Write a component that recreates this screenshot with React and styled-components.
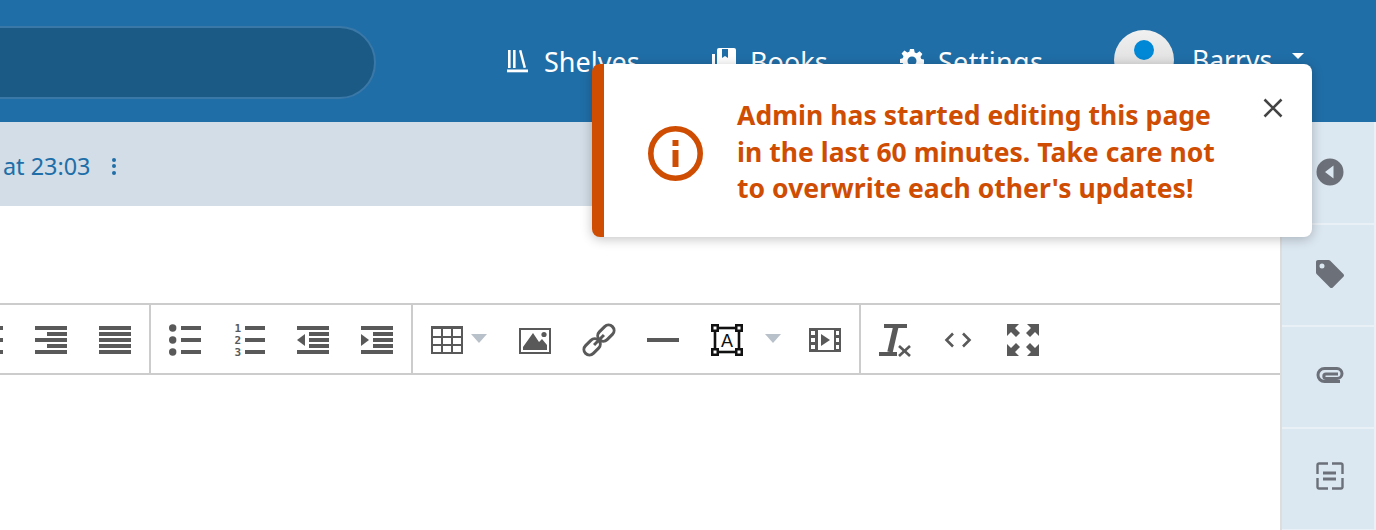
import React from "react";
import styled, { createGlobalStyle } from "styled-components";

const GlobalStyle = createGlobalStyle`
  html, body {
    margin: 0;
    padding: 0;
    background: #ffffff;
    overflow: hidden;
  }
  body {
    font-family: "Noto Sans", "Open Sans", sans-serif;
  }
`;

const Page = styled.div`
  position: relative;
  width: 1376px;
  height: 530px;
  overflow: hidden;
`;

const Header = styled.header`
  height: 122px;
  background: #206ea7;
  display: flex;
  align-items: center;
  color: #ffffff;
`;

const Search = styled.div`
  width: 426px;
  height: 73px;
  margin-left: -50px;
  margin-top: 3px;
  box-sizing: border-box;
  border-radius: 37px;
  background: #1c5a86;
  border: 2px solid #3a78a8;
`;

const Nav = styled.nav`
  display: flex;
  align-items: center;
  margin-left: 131px;
`;

const NavLink = styled.a`
  display: flex;
  align-items: center;
  gap: ${(p) => p.$gap}px;
  width: ${(p) => p.$width}px;
  font-size: 27px;
  letter-spacing: ${(p) => p.$spacing || 0}px;
  color: #ffffff;
`;

const User = styled.div`
  display: flex;
  align-items: center;
  margin-left: -4px;
  margin-top: -2px;
  font-size: 26.5px;
`;

const Avatar = styled.div`
  position: relative;
  width: 60px;
  height: 60px;
  border-radius: 50%;
  background: linear-gradient(#f1f1f1, #d4d4d4);
  margin-right: 18px;
  &::after {
    content: "";
    position: absolute;
    left: 20px;
    top: 10px;
    width: 20px;
    height: 20px;
    border-radius: 50%;
    background: #0088d6;
  }
`;

const Caret = styled.span`
  width: 0;
  height: 0;
  margin-left: 20px;
  margin-top: -8px;
  border-left: 6px solid transparent;
  border-right: 6px solid transparent;
  border-top: 6px solid #ffffff;
`;

const Main = styled.div`
  display: flex;
  height: 408px;
`;

const Content = styled.main`
  flex: 1;
  min-width: 0;
  overflow: hidden;
`;

const MetaBar = styled.div`
  height: 84px;
  box-sizing: border-box;
  padding: 4px 0 0 3px;
  background: #d2dde7;
  display: flex;
  align-items: center;
  color: #206ea7;
  font-size: 23.4px;
`;

const Dots = styled.span`
  display: flex;
  flex-direction: column;
  gap: 2.5px;
  margin-left: 22px;
  i {
    display: block;
    width: 4px;
    height: 4px;
    border-radius: 50%;
    background: #206ea7;
  }
`;

const TitleArea = styled.div`
  height: 97px;
  background: #ffffff;
`;

const Toolbar = styled.div`
  display: flex;
  height: 68px;
  width: 1400px;
  margin-left: -45px;
  border-top: 2px solid #cccccc;
  border-bottom: 2px solid #cccccc;
`;

const Group = styled.div`
  display: flex;
  padding: 0 2px 0 ${(p) => (p.$first ? 0 : 2)}px;
  border-right: ${(p) => (p.$last ? 0 : 2)}px solid #cccccc;
`;

const ToolButton = styled.div`
  width: ${(p) => p.$width || 64}px;
  height: 68px;
  box-sizing: border-box;
  padding: 2px 0 0 16px;
  display: flex;
  align-items: center;
  gap: 8px;
  color: #595959;
  svg {
    flex: none;
  }
`;

const SplitCaret = styled.span`
  flex: none;
  width: 0;
  height: 0;
  margin-top: -3px;
  margin-left: ${(p) => p.$offset || 0}px;
  border-left: 8px solid transparent;
  border-right: 8px solid transparent;
  border-top: 9px solid #b8c1c9;
`;

const Sidebar = styled.aside`
  width: 96px;
  flex: none;
  box-sizing: border-box;
  padding-top: 1px;
  background: #dbe7f1;
  border-left: 2px solid #dddddd;
  border-right: 2px solid #e9f0f6;
`;

const SideItem = styled.div`
  height: 102px;
  box-sizing: border-box;
  border-bottom: 2px solid #e9f0f6;
  padding-top: ${(p) => p.$top}px;
  padding-left: 4px;
  display: flex;
  justify-content: center;
  color: #6c7078;
`;

const Toast = styled.div`
  position: absolute;
  left: 592px;
  top: 64px;
  width: 720px;
  height: 173px;
  box-sizing: border-box;
  display: flex;
  align-items: center;
  gap: 34px;
  padding: 4px 0 0 44px;
  background: #ffffff;
  border-left: 12px solid #cf4d03;
  border-radius: 8px;
  box-shadow: 0 2px 12px rgba(0, 0, 0, 0.24);
  color: #cf4d03;
`;

const ToastIcon = styled.div`
  display: flex;
  margin-top: 2px;
`;

const ToastText = styled.div`
  font-size: 26.5px;
  font-weight: 700;
  letter-spacing: 0.04px;
  line-height: 36.7px;
  margin-top: -1px;
`;

const Close = styled.button`
  position: absolute;
  right: 29px;
  top: 34px;
  padding: 0;
  border: 0;
  background: none;
  display: flex;
  color: #444444;
`;

const Icon = ({ size = 32, h, children, fill = "currentColor" }) => (
  <svg width={size} height={h || size} viewBox={`0 0 ${size} ${h || size}`} fill={fill} overflow="visible">
    {children}
  </svg>
);

const Lines = ({ rows }) =>
  rows.map(([x, w], i) => <rect key={i} x={x} y={2 + i * 6} width={w} height="4" />);

const AlignCenter = () => (
  <Icon><Lines rows={[[0, 32], [6, 20], [0, 32], [6, 20], [0, 32]]} /></Icon>
);
const AlignRight = () => (
  <Icon><Lines rows={[[0, 32], [12, 20], [0, 32], [12, 20], [0, 32]]} /></Icon>
);
const Justify = () => (
  <Icon><Lines rows={[[0, 32], [0, 32], [0, 32], [0, 32], [0, 32]]} /></Icon>
);
const BulletList = () => (
  <Icon>
    {[4, 16, 28].map((y) => (
      <g key={y}>
        <circle cx="3.7" cy={y} r="3.7" />
        <rect x="12" y={y - 2} width="20" height="4" />
      </g>
    ))}
  </Icon>
);
const NumberList = () => (
  <Icon>
    {[4, 16, 28].map((y, i) => (
      <g key={y}>
        <text x="1.5" y={y + 4} fontFamily="'DejaVu Sans Mono', monospace" fontWeight="700" fontSize="11">
          {i + 1}
        </text>
        <rect x="12" y={y - 2} width="20" height="4" />
      </g>
    ))}
  </Icon>
);
const Outdent = () => (
  <Icon>
    <Lines rows={[[0, 32], [12, 20], [12, 20], [12, 20], [0, 32]]} />
    <polygon points="0,16 8,10 8,22" />
  </Icon>
);
const Indent = () => (
  <Icon>
    <Lines rows={[[0, 32], [12, 20], [12, 20], [12, 20], [0, 32]]} />
    <polygon points="8,16 0,10 0,22" />
  </Icon>
);
const TableIcon = () => (
  <Icon>
    <path d="M0 2h32v28H0zM2 5v7h8V5zm10 0v7h8V5zm10 0v7h8V5zM2 14v6h8v-6zm10 0v6h8v-6zm10 0v6h8v-6zM2 22v6h8v-6zm10 0v6h8v-6zm10 0v6h8v-6z" fillRule="evenodd" />
  </Icon>
);
const ImageIcon = () => (
  <Icon>
    <path d="M0 4h32v26H0zM2 6v22h28V6z" fillRule="evenodd" />
    <polygon points="4,26 4,23 14,9 20,18 23,15 28,21 28,26" />
    <circle cx="25" cy="10.5" r="2.6" />
  </Icon>
);
const LinkIcon = () => (
  <Icon fill="none">
    <g stroke="currentColor" strokeWidth="3" transform="rotate(-45 16 16)">
      <rect x="-3" y="10.5" width="18.5" height="11" rx="5.5" />
      <rect x="16.5" y="10.5" width="18.5" height="11" rx="5.5" />
      <line x1="9" y1="16" x2="23" y2="16" />
    </g>
  </Icon>
);
const RuleIcon = () => (
  <Icon><rect x="0" y="14" width="32" height="4" /></Icon>
);
const AnchorBox = () => (
  <Icon fill="none">
    <rect x="4" y="4" width="24" height="24" stroke="#111111" strokeWidth="2.6" />
    {[[0, 0], [24, 0], [0, 24], [24, 24]].map(([x, y]) => (
      <rect key={`${x}-${y}`} x={x + 1.25} y={y + 1.25} width="5.5" height="5.5" fill="#ffffff" stroke="#111111" strokeWidth="2.5" />
    ))}
    <text x="16" y="22.5" textAnchor="middle" fill="#111111" fontFamily="'Liberation Sans', sans-serif" fontSize="18">A</text>
  </Icon>
);
const MediaIcon = () => (
  <Icon>
    <path d="M0 4h32v24H0zM9 6v20h16V6zM2 7v4h4V7zm25 0v4h3V7zM2 14v4h4v-4zm25 0v4h3v-4zM2 21v4h4v-4zm25 0v4h3v-4z" fillRule="evenodd" />
    <polygon points="12,10 21,16 12,22" />
  </Icon>
);
const RemoveFormat = () => (
  <Icon fill="none">
    <g stroke="currentColor">
      <line x1="5" y1="2" x2="28" y2="2" strokeWidth="4" />
      <line x1="17" y1="2" x2="11" y2="28" strokeWidth="5.5" />
    </g>
    <rect x="0" y="28" width="18" height="4" fill="currentColor" />
    <g stroke="currentColor" strokeWidth="2.6">
      <line x1="20" y1="22" x2="31" y2="32" />
      <line x1="31" y1="22" x2="20" y2="32" />
    </g>
  </Icon>
);
const CodeIcon = () => (
  <Icon fill="none">
    <g stroke="currentColor" strokeWidth="2.6">
      <polyline points="10,9.5 3.5,16 10,22.5" />
      <polyline points="20,9.5 26.5,16 20,22.5" />
    </g>
  </Icon>
);
const Fullscreen = () => (
  <Icon>
    <polygon points="0,0 12,0 8,4 13,9 9,13 4,8 0,12" />
    <polygon points="32,0 20,0 24,4 19,9 23,13 28,8 32,12" />
    <polygon points="0,32 12,32 8,28 13,23 9,19 4,24 0,20" />
    <polygon points="32,32 20,32 24,28 19,23 23,19 28,24 32,20" />
  </Icon>
);

const ShelvesIcon = () => (
  <svg width="22" height="24" viewBox="0 0 22 24" fill="#ffffff">
    <rect x="1" y="1" width="2.6" height="18" />
    <rect x="6" y="1" width="2.6" height="18" />
    <polygon points="12,1.6 14.4,1 19,18.4 16.6,19" />
    <rect x="0" y="20.5" width="21" height="2.8" />
  </svg>
);
const BooksIcon = () => (
  <svg width="24" height="26" viewBox="0 0 24 26" fill="#ffffff">
    <path d="M0 6h3v18H0zM5 2a2 2 0 0 1 2-2h15a2 2 0 0 1 2 2v22H5zM10 1v9l3-2 3 2V1z" fillRule="evenodd" />
  </svg>
);
const GearIcon = () => (
  <svg width="24" height="24" viewBox="0 0 24 24" fill="#ffffff">
    <path fillRule="evenodd" d="M10 0h4l.7 3.4 2 .8 2.9-1.9 2.8 2.8-1.9 2.9.8 2 3.4.7v4l-3.4.7-.8 2 1.9 2.9-2.8 2.8-2.9-1.9-2 .8L14 24h-4l-.7-3.4-2-.8-2.9 1.9-2.8-2.8 1.9-2.9-.8-2L0 14v-4l2.7-.7.8-2-1.9-2.9 2.8-2.8 2.9 1.9 2-.8zM12 7.5a4.5 4.5 0 1 0 0 9 4.5 4.5 0 0 0 0-9z" />
  </svg>
);

const BackIcon = () => (
  <svg width="28" height="28" viewBox="0 0 28 28" fill="currentColor">
    <path fillRule="evenodd" d="M14 .5a13.5 13.5 0 1 0 0 27 13.5 13.5 0 0 0 0-27zM17.5 7.5v13L9 14z" />
  </svg>
);
const TagIcon = () => (
  <svg width="28" height="28" viewBox="0 0 28 28" fill="currentColor">
    <path fillRule="evenodd" d="M2 0h10.5c.6 0 1.1.2 1.5.6l13.4 13.4c.8.8.8 2 0 2.8L16.8 27.4c-.8.8-2 .8-2.8 0L.6 14c-.4-.4-.6-.9-.6-1.5V2C0 .9.9 0 2 0zM6 3.5a2.5 2.5 0 1 0 0 5 2.5 2.5 0 0 0 0-5z" />
  </svg>
);
const ClipIcon = () => (
  <svg width="28" height="18" viewBox="0 0 28 18" fill="none" stroke="currentColor" strokeWidth="3">
    <path d="M24 14.5H8.5a6.5 6.5 0 0 1 0-13H21a5 5 0 0 1 0 10H10a2.2 2.2 0 0 1 0-4.4H22" />
  </svg>
);
const FragmentIcon = () => (
  <svg width="28" height="28" viewBox="0 0 28 28" fill="none" stroke="currentColor" strokeWidth="2.4">
    <path d="M12 1.5H3A1.5 1.5 0 0 0 1.5 3v9M16 1.5h9A1.5 1.5 0 0 1 26.5 3v9M12 26.5H3A1.5 1.5 0 0 1 1.5 25v-9M16 26.5h9a1.5 1.5 0 0 0 1.5-1.5v-9" />
    <path d="M7 11h13M7 17h13" strokeWidth="3" />
  </svg>
);
const InfoIcon = () => (
  <svg width="55" height="55" viewBox="0 0 55 55" fill="currentColor">
    <circle cx="27.5" cy="27.5" r="24.7" fill="none" stroke="currentColor" strokeWidth="5.6" />
    <rect x="24.5" y="14" width="6" height="6" />
    <rect x="24.5" y="24" width="6" height="17" />
  </svg>
);
const CloseIcon = () => (
  <svg width="20" height="20" viewBox="0 0 20 20" fill="none" stroke="currentColor" strokeWidth="2.6">
    <path d="M1.5 1.5l17 17M18.5 1.5l-17 17" />
  </svg>
);

export default function App() {
  return (
    <Page>
      <GlobalStyle />
      <Header>
        <Search />
        <Nav>
          <NavLink $gap={15} $width={205}>
            <ShelvesIcon />
            Shelves
          </NavLink>
          <NavLink $gap={14} $width={188}>
            <BooksIcon />
            Books
          </NavLink>
          <NavLink $gap={14} $width={218} $spacing={0.3}>
            <GearIcon />
            Settings
          </NavLink>
        </Nav>
        <User>
          <Avatar />
          Barrys
          <Caret />
        </User>
      </Header>
      <Main>
        <Content>
          <MetaBar>
            at 23:03
            <Dots>
              <i />
              <i />
              <i />
            </Dots>
          </MetaBar>
          <TitleArea />
          <Toolbar>
            <Group $first>
              <ToolButton><AlignCenter /></ToolButton>
              <ToolButton><AlignRight /></ToolButton>
              <ToolButton><Justify /></ToolButton>
            </Group>
            <Group>
              <ToolButton><BulletList /></ToolButton>
              <ToolButton><NumberList /></ToolButton>
              <ToolButton><Outdent /></ToolButton>
              <ToolButton><Indent /></ToolButton>
            </Group>
            <Group>
              <ToolButton $width={88}><TableIcon /><SplitCaret /></ToolButton>
              <ToolButton><ImageIcon /></ToolButton>
              <ToolButton><LinkIcon /></ToolButton>
              <ToolButton><RuleIcon /></ToolButton>
              <ToolButton $width={98}><AnchorBox /><SplitCaret $offset={14} /></ToolButton>
              <ToolButton><MediaIcon /></ToolButton>
            </Group>
            <Group $last>
              <ToolButton><RemoveFormat /></ToolButton>
              <ToolButton><CodeIcon /></ToolButton>
              <ToolButton><Fullscreen /></ToolButton>
            </Group>
          </Toolbar>
        </Content>
        <Sidebar>
          <SideItem $top={35}><div><BackIcon /></div></SideItem>
          <SideItem $top={35}><div><TagIcon /></div></SideItem>
          <SideItem $top={40}><div><ClipIcon /></div></SideItem>
          <SideItem $top={33}><div><FragmentIcon /></div></SideItem>
        </Sidebar>
      </Main>
      <Toast>
        <ToastIcon>
          <InfoIcon />
        </ToastIcon>
        <ToastText>
          Admin has started editing this page
          <br />
          in the last 60 minutes. Take care not
          <br />
          to overwrite each other's updates!
        </ToastText>
        <Close aria-label="Close">
          <CloseIcon />
        </Close>
      </Toast>
    </Page>
  );
}
